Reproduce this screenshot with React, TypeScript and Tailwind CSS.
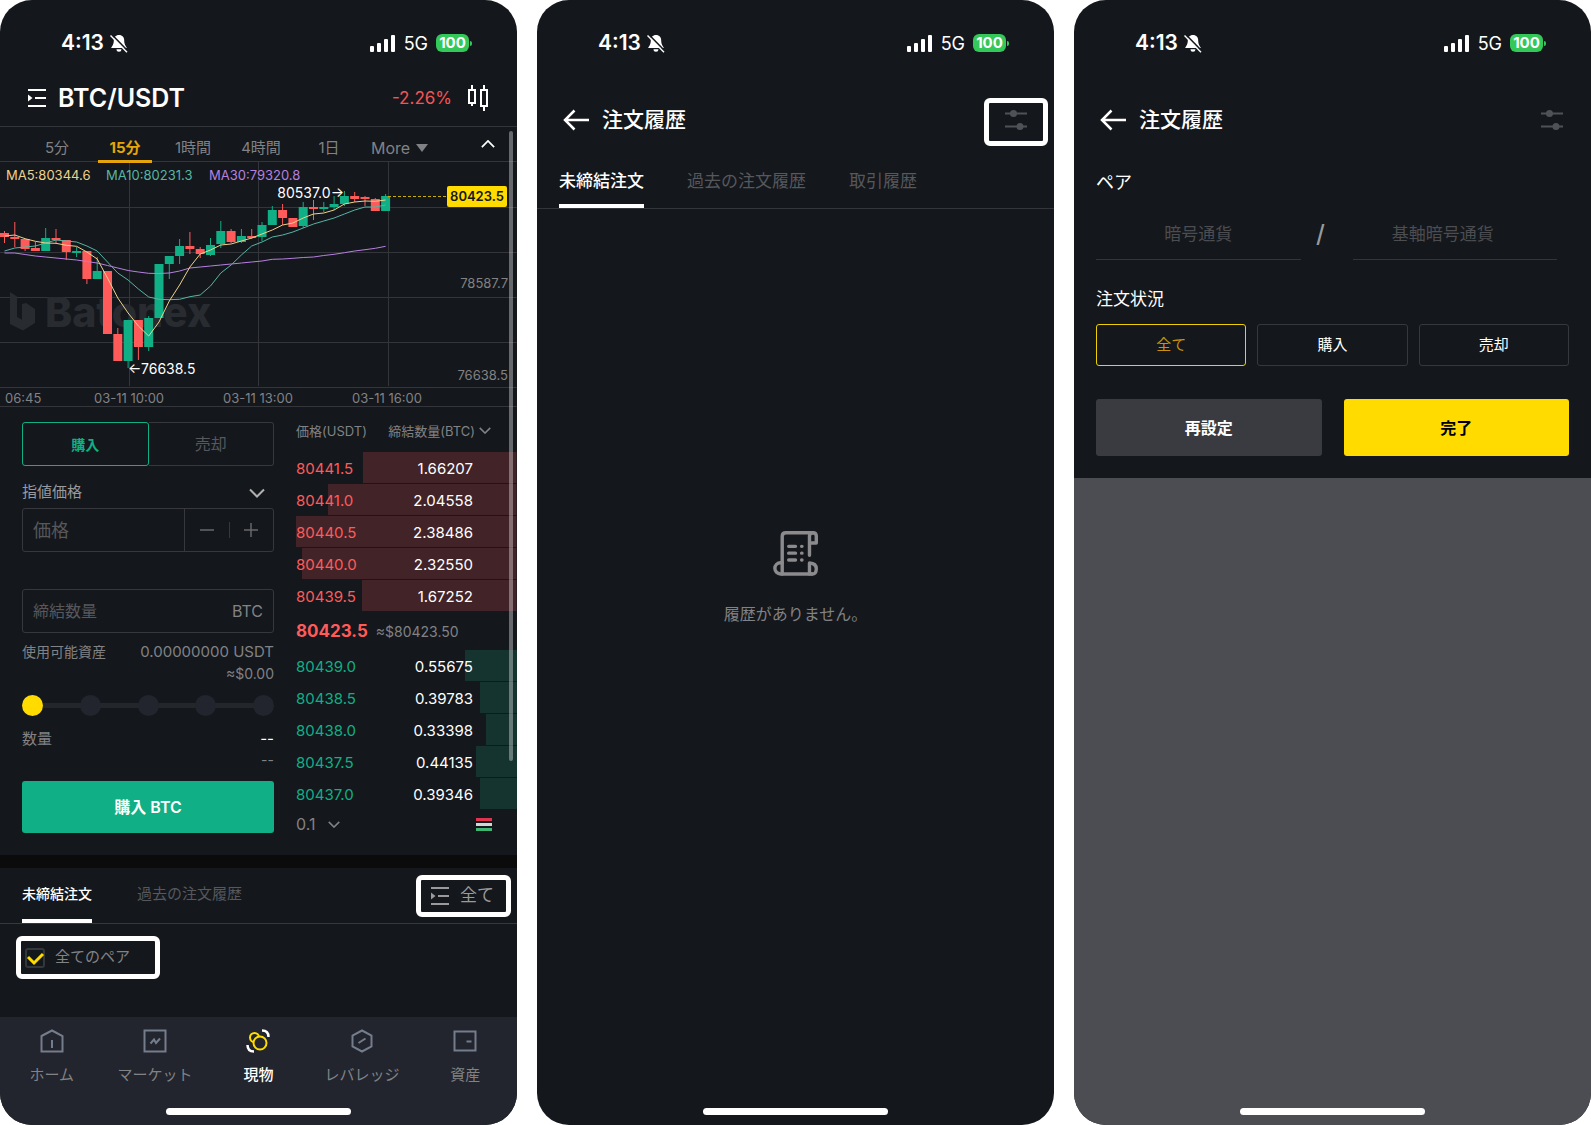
import { useState } from "react";
import type { ReactNode } from "react";

// top, bottom, high, low (chart px), up/down
const CANDLES: [number, number, number, number, boolean][] = [
  [72, 76, 70, 82, false],
  [76, 78, 61, 86, false],
  [78, 88, 78, 90, false],
  [87, 90, 81, 90, false],
  [77, 90, 67, 90, true],
  [77, 79, 68, 82, false],
  [79, 91, 79, 99, false],
  [90, 92, 86, 96, true],
  [90, 118, 90, 123, false],
  [110, 118, 96, 118, true],
  [110, 173, 110, 173, false],
  [173, 200, 167, 200, false],
  [159, 200, 159, 207, true],
  [159, 186, 159, 199, false],
  [157, 186, 155, 190, true],
  [103, 157, 103, 157, true],
  [95, 103, 95, 118, true],
  [85, 95, 78, 103, true],
  [85, 88, 71, 93, false],
  [88, 93, 86, 97, false],
  [84, 94, 77, 95, true],
  [70, 83, 60, 87, true],
  [70, 81, 68, 82, false],
  [75, 81, 68, 82, true],
  [75, 77, 68, 78, false],
  [64, 76, 61, 80, true],
  [49, 64, 45, 64, true],
  [49, 57, 43, 64, false],
  [57, 66, 57, 66, false],
  [46, 65, 41, 67, true],
  [46, 48, 39, 59, false],
  [46, 48, 41, 51, true],
  [43, 46, 35, 49, true],
  [35, 43, 30, 45, true],
  [35, 38, 31, 41, false],
  [36, 38, 35, 45, false],
  [38, 50, 37, 50, false],
  [35, 50, 33, 50, true],
];

const AVERAGES = [
  {
    color: "#b780e0",
    values: [92, 92, 93.5, 95, 96, 97, 98, 99, 100.5, 102, 104.5, 107, 109.5, 111, 112.3, 112.5, 112, 110, 107, 106, 105, 104, 103, 102, 101, 100, 98.3, 98, 97.3, 96.5, 96, 94.5, 93.3, 91.7, 90, 88.7, 87.3, 85.3],
  },
  {
    color: "#57b5a3",
    values: [90, 87, 86, 85, 82, 79, 80, 81, 85, 90, 101, 112, 119, 128, 136, 138.3, 138.7, 138.3, 135.7, 134, 125, 112, 104, 94, 85, 81, 76, 74, 71, 67, 63, 60, 57, 53, 49, 46, 46, 44],
  },
  {
    color: "#eed28b",
    values: [75, 74, 77.7, 80.3, 82, 82.3, 84.3, 85.3, 91, 98, 117, 137, 152, 165, 175, 161, 140, 124, 106, 93, 89, 84, 83, 80, 77, 73, 69, 64, 62, 57, 53, 52, 49, 43, 41, 40, 40.3, 39],
  },
];

const candleX = (i: number) => 4.5 + i * 10.3;

const ASKS = [
  { price: "80441.5", amount: "1.66207", depth: 154 },
  { price: "80441.0", amount: "2.04558", depth: 189 },
  { price: "80440.5", amount: "2.38486", depth: 221 },
  { price: "80440.0", amount: "2.32550", depth: 215 },
  { price: "80439.5", amount: "1.67252", depth: 155 },
];

const BIDS = [
  { price: "80439.0", amount: "0.55675", depth: 52 },
  { price: "80438.5", amount: "0.39783", depth: 37 },
  { price: "80438.0", amount: "0.33398", depth: 31 },
  { price: "80437.5", amount: "0.44135", depth: 41 },
  { price: "80437.0", amount: "0.39346", depth: 37 },
];

const MAX_DEPTH = 221;

function StatusBar() {
  return (
    <div className="flex h-[70px] items-center pt-4 pr-[45px] pl-[61px]">
      <span className="text-[21px] font-semibold">4:13</span>
      <svg viewBox="0 0 18 19" className="ml-[6px] h-[19px] w-[18px]" fill="none">
        <path d="M9 1c-3.300 0-5.200 2.400-5.200 5.400C3.800 11 1.800 11.800 1.200 14h15.600c-.6-2.200-2.600-3-2.600-7.600C14.200 3.400 12.300 1 9 1zM6.500 15.300a2.500 2.500 0 005 0z" fill="#fff" />
        <path d="M1.800.6L18 17.200" stroke="#14171c" strokeWidth="1.600" />
        <path d="M.5 1.400L17 18.200" stroke="#fff" strokeWidth="1.400" />
      </svg>
      <svg viewBox="0 0 26 17" className="ml-auto h-[17px] w-[26px]" fill="#fff">
        <rect x="0" y="11" width="4" height="6" rx="1" />
        <rect x="7" y="8" width="4" height="9" rx="1" />
        <rect x="14" y="4" width="4" height="13" rx="1" />
        <rect x="21" y="0" width="4" height="17" rx="1" />
      </svg>
      <span className="ml-2 text-[18px]">5G</span>
      <span className="ml-2 flex h-[18px] w-[33px] items-center justify-center rounded-md bg-[#34c759] text-[15px] font-bold">
        100
      </span>
      <span className="ml-px h-[5px] w-[2px] rounded-r bg-[#34c759]" />
    </div>
  );
}

function HomeIndicator() {
  return <div className="mx-auto mb-[10px] h-[7px] w-[185px] rounded-full bg-white" />;
}

function Phone({ children }: { children: ReactNode }) {
  return (
    <section className="relative flex flex-col overflow-hidden rounded-[32px] bg-[#14171c] text-white">
      <StatusBar />
      {children}
    </section>
  );
}

function ListIcon() {
  return (
    <svg viewBox="0 0 20 20" className="h-5 w-5" fill="none" stroke="currentColor" strokeWidth="2">
      <path d="M1 2h18M8 10h11M1 18h18" />
      <path d="M1 6.500v7l4.500-3.500z" fill="currentColor" stroke="none" />
    </svg>
  );
}

function Chevron({ className }: { className: string }) {
  return (
    <svg viewBox="0 0 16 9" className={className} fill="none" stroke="currentColor" strokeWidth="2">
      <path d="M1 1l7 7 7-7" />
    </svg>
  );
}

function FilterIcon() {
  return (
    <svg viewBox="0 0 22 20" className="h-5 w-[22px]" fill="#4f5256" stroke="#4f5256" strokeWidth="2">
      <path d="M0 3.500h22M0 16.500h22" />
      <circle cx="8.500" cy="3.500" r="2.500" />
      <circle cx="15" cy="16.500" r="2.500" />
    </svg>
  );
}

function PriceChart() {
  return (
    <svg viewBox="0 1 517 245" className="block w-full" role="img" aria-label="BTC/USDT 15分">
      <g stroke="#33353a" strokeWidth="1">
        {[46.5, 91.5, 136.5, 181.5, 226.5, 245.5].map((y) => (
          <path key={y} d={`M0 ${y}H517`} />
        ))}
        {[129.5, 258.5, 388.5].map((x) => (
          <path key={x} d={`M${x} 1V225`} />
        ))}
      </g>

      {/* watermark */}
      <g fill="#282b30">
        <path d="M10 131l7 4.500v20.500l5 2.800 0-15.800 4-1 9 6v14l-12 7.500-13-6.500z" />
        <text x="45" y="166" fontSize="41" fontWeight="800">Batonex</text>
      </g>

      {CANDLES.map(([top, bottom, high, low, up], i) => (
        <g key={i} fill={up ? "#10af85" : "#ff5b5a"}>
          <rect x={candleX(i) - 4.5} y={top} width="9" height={bottom - top} />
          <rect x={candleX(i) - 0.5} y={high} width="1" height={low - high} />
        </g>
      ))}
      {AVERAGES.map((line) => (
        <polyline
          key={line.color}
          points={line.values.map((y, i) => `${candleX(i)},${y}`).join(" ")}
          fill="none"
          stroke={line.color}
          strokeWidth="1"
        />
      ))}

      <g fontSize="13">
        <text x="6" y="19" fill="#eed28b">MA5:80344.6</text>
        <text x="106" y="19" fill="#57b5a3">MA10:80231.3</text>
        <text x="209" y="19" fill="#b780e0">MA30:79320.8</text>
      </g>
      <g fontSize="14" fill="#fff">
        <text x="344" y="37" textAnchor="end">80537.0→</text>
        <text x="128" y="213">←76638.5</text>
      </g>

      <path d="M388 35.500H447" stroke="#c9ac0c" strokeDasharray="3 2" />
      <rect x="447" y="25" width="60" height="21" rx="2" fill="#ffdb00" />
      <text x="477" y="40" textAnchor="middle" fontSize="13" fontWeight="600" fill="#14171c">80423.5</text>

      <g fontSize="13" fill="#818285">
        <text x="508" y="127" textAnchor="end">78587.7</text>
        <text x="508" y="219" textAnchor="end">76638.5</text>
        <text x="5" y="242">06:45</text>
        <text x="129" y="242" textAnchor="middle">03-11 10:00</text>
        <text x="258" y="242" textAnchor="middle">03-11 13:00</text>
        <text x="387" y="242" textAnchor="middle">03-11 16:00</text>
      </g>
    </svg>
  );
}

function BookRows({ rows, side }: { rows: typeof ASKS; side: "ask" | "bid" }) {
  const fill = side === "ask" ? "#412328" : "#15342f";
  return (
    <tbody>
      {rows.map((row) => (
        <tr
          key={row.price}
          className="h-8 bg-right-top bg-no-repeat"
          style={{
            backgroundImage: `linear-gradient(${fill}, ${fill})`,
            backgroundSize: `${(row.depth / MAX_DEPTH) * 100}% 31px`,
          }}
        >
          <td className={side === "ask" ? "pt-px text-[#ff5b5a]" : "pt-px text-[#10af85]"}>{row.price}</td>
          <td className="pt-px pr-[44px] text-right">{row.amount}</td>
        </tr>
      ))}
    </tbody>
  );
}

function OrderBook() {
  return (
    <div className="min-w-0 flex-1">
      <table className="w-full border-collapse text-[15px] leading-5">
        <thead>
          <tr className="h-[45px] text-[13px] text-[#818285]">
            <th className="pt-[2px] text-left font-normal whitespace-nowrap">価格(USDT)</th>
            <th className="pt-[2px] pr-[26px] font-normal">
              <button className="ml-auto flex items-center gap-1 whitespace-nowrap">
                締結数量(BTC)
                <Chevron className="h-[7px] w-3" />
              </button>
            </th>
          </tr>
        </thead>
        <BookRows rows={ASKS} side="ask" />
        <tbody>
          <tr className="h-[38px]">
            <td colSpan={2} className="pt-px whitespace-nowrap">
              <span className="text-[17px] font-bold text-[#ff5b5a]">80423.5</span>
              <span className="ml-2 text-[14px] text-[#818285]">≈$80423.50</span>
            </td>
          </tr>
        </tbody>
        <BookRows rows={BIDS} side="bid" />
      </table>
      <div className="flex h-[28px] items-center justify-between pr-[25px] text-[#818285]">
        <label className="relative flex items-center">
          <select aria-label="価格単位" className="w-[44px] appearance-none bg-transparent text-[16px]">
            <option>0.1</option>
          </select>
          <Chevron className="pointer-events-none absolute right-0 h-[7px] w-3" />
        </label>
        <button aria-label="板表示">
          <svg viewBox="0 0 16 13" className="h-[13px] w-4">
            <rect y="0" width="16" height="3" fill="#e0334f" />
            <rect y="5" width="16" height="3" fill="#d5d5d5" />
            <rect y="10" width="16" height="3" fill="#3fb574" />
          </svg>
        </button>
      </div>
    </div>
  );
}

function OrderForm() {
  const [percent, setPercent] = useState(0);

  return (
    <form className="flex w-[252px] shrink-0 flex-col pt-[15px] text-[#818285]" onSubmit={(e) => e.preventDefault()}>
      <div className="flex h-[44px]">
        <button type="button" className="flex-1 rounded-[3px] border border-[#10af85] text-[14px] font-bold text-[#10af85]">
          購入
        </button>
        <button type="button" className="flex-1 rounded-r-[3px] border border-l-0 border-[#36383d] text-[16px] text-[#56585c]">
          売却
        </button>
      </div>

      <label className="relative mt-[11px] flex h-[31px] items-center">
        <select aria-label="注文方法" className="w-full appearance-none bg-transparent text-[15px] text-[#9a9a9c]">
          <option>指値価格</option>
        </select>
        <Chevron className="pointer-events-none absolute right-[9px] h-[10px] w-4 text-[#b0b0b0]" />
      </label>

      <div className="flex h-[44px] items-center rounded-[3px] border border-[#36383d]">
        <input
          aria-label="価格"
          placeholder="価格"
          className="h-full min-w-0 flex-1 border-r border-[#36383d] bg-transparent pl-[10px] text-[18px] outline-none placeholder:text-[#56585c]"
        />
        <div className="flex w-[88px] items-center justify-between px-[15px] text-[#66686b]">
          <button type="button" aria-label="減らす">
            <svg viewBox="0 0 14 14" className="h-[14px] w-[14px]" stroke="currentColor" strokeWidth="1.500">
              <path d="M0 7h14" />
            </svg>
          </button>
          <span className="h-4 w-px bg-[#36383d]" />
          <button type="button" aria-label="増やす">
            <svg viewBox="0 0 14 14" className="h-[14px] w-[14px]" stroke="currentColor" strokeWidth="1.500">
              <path d="M0 7h14M7 0v14" />
            </svg>
          </button>
        </div>
      </div>

      <label className="mt-[37px] flex h-[44px] items-center rounded-[3px] border border-[#36383d] px-[10px] text-[16px]">
        <input
          aria-label="締結数量"
          placeholder="締結数量"
          className="min-w-0 flex-1 bg-transparent outline-none placeholder:text-[#56585c]"
        />
        BTC
      </label>

      <div className="mt-2 flex justify-between text-[15px] leading-[21px]">
        <span className="text-[14px]">使用可能資産</span>
        <span>0.00000000 USDT</span>
      </div>
      <div className="text-right text-[14px] leading-[23px]">≈$0.00</div>

      <div className="relative mt-[10px] flex h-[21px] items-center justify-between">
        <div className="absolute inset-x-2 top-2 h-[5px] bg-[#23262b]" />
        {[0, 25, 50, 75, 100].map((step) => (
          <span
            key={step}
            className={`relative h-[21px] w-[21px] rounded-full ${step <= percent ? "bg-[#ffdb00]" : "bg-[#22252d]"}`}
          />
        ))}
        <input
          type="range"
          aria-label="割合"
          min={0}
          max={100}
          step={25}
          value={percent}
          onChange={(e) => setPercent(Number(e.target.value))}
          className="absolute inset-0 h-full w-full cursor-pointer opacity-0"
        />
      </div>

      <div className="mt-3 flex justify-between text-[15px] leading-[22px]">
        <span>数量</span>
        <span className="text-white">--</span>
      </div>
      <div className="text-right text-[14px] leading-5">--</div>

      <button type="submit" className="mt-[11px] h-[52px] rounded-[3px] bg-[#10af85] text-[16px] font-semibold text-white">
        購入 BTC
      </button>
    </form>
  );
}

const NAV_ITEMS = [
  {
    label: "ホーム",
    icon: (
      <g stroke="#747d8c" strokeWidth="2">
        <path d="M1.500 7L12 1.500 22.500 7v15.500h-21zM12 11v8" />
      </g>
    ),
  },
  {
    label: "マーケット",
    icon: (
      <g stroke="#747d8c" strokeWidth="2">
        <path d="M1.500 1.500h21v21h-21z" />
        <path d="M7.500 14.500l3.500-4 2 3.500 4-4.500" />
      </g>
    ),
  },
  {
    label: "現物",
    active: true,
    icon: (
      <g strokeWidth="2">
        <circle cx="8.500" cy="8.500" r="4.500" stroke="#ffdb00" />
        <circle cx="14" cy="14" r="6.500" stroke="#ffdb00" fill="#22252d" />
        <path d="M16 1.500q6.500 0 6.500 6.500M1.500 16q0 6.500 6.500 6.500" stroke="#fff" strokeWidth="2.500" />
      </g>
    ),
  },
  {
    label: "レバレッジ",
    icon: (
      <g stroke="#747d8c" strokeWidth="2">
        <path d="M12 1.500l9.500 5v11l-9.500 5-9.500-5v-11z" />
        <path d="M8.500 14l7-4.500" />
      </g>
    ),
  },
  {
    label: "資産",
    icon: (
      <g stroke="#747d8c" strokeWidth="2">
        <path d="M1.500 2.500h21v19h-21z" />
        <path d="M13.500 12.500h5" />
      </g>
    ),
  },
];

function BottomNav() {
  return (
    <nav className="mt-auto bg-[#22252d] pt-3">
      <ul className="grid grid-cols-5">
        {NAV_ITEMS.map((item) => (
          <li key={item.label}>
            <a href="#" className="flex flex-col items-center gap-[10px]">
              <svg viewBox="0 0 24 24" className="h-6 w-6" fill="none">
                {item.icon}
              </svg>
              <span className={`text-[15px] leading-[24px] whitespace-nowrap ${item.active ? "font-medium text-white" : "text-[#818285]"}`}>
                {item.label}
              </span>
            </a>
          </li>
        ))}
      </ul>
      <div className="pt-[21px]">
        <HomeIndicator />
      </div>
    </nav>
  );
}

function TradeScreen() {
  const [allPairs, setAllPairs] = useState(true);

  return (
    <Phone>
      <header className="flex h-[57px] items-center border-b border-[#33353a] pr-[28px] pl-[27px]">
        <button aria-label="通貨ペア一覧">
          <ListIcon />
        </button>
        <h1 className="ml-[11px] pt-px text-[25px] font-semibold">BTC/USDT</h1>
        <span className="ml-auto pt-[2px] text-[17px] text-[#f65454]">-2.26%</span>
        <button aria-label="チャート" className="ml-[15px]">
          <svg viewBox="0 0 22 28" className="h-7 w-[22px]" fill="none" stroke="#fff" strokeWidth="2">
            <path d="M2 6h6v13H2zM14 6h6v16h-6zM5 1v5M5 19v3M17 1v5M17 22v5" />
          </svg>
        </button>
      </header>

      <div className="flex h-[35px] items-center border-b border-[#33353a] pr-[22px] pl-[23px] text-[15px] text-[#818285]">
        {["5分", "15分", "1時間", "4時間", "1日"].map((frame) => (
          <button key={frame} className="relative h-[34px] w-[68px] pt-2 whitespace-nowrap">
            {frame === "15分" ? <span className="font-bold text-[#e5a50a]">{frame}</span> : frame}
            {frame === "15分" && <span className="absolute inset-x-[7px] -bottom-[2px] h-[3px] bg-[#e5a50a]" />}
          </button>
        ))}
        <button className="flex items-center gap-[6px] pt-2 pl-2 text-[16px]">
          More
          <svg viewBox="0 0 12 8" className="h-2 w-3" fill="currentColor">
            <path d="M0 0h12L6 8z" />
          </svg>
        </button>
        <button aria-label="チャートを閉じる" className="ml-auto text-white">
          <Chevron className="h-2 w-[14px] rotate-180" />
        </button>
      </div>

      <PriceChart />

      <div className="flex gap-[22px] pb-[17px] pl-[22px]">
        <OrderForm />
        <OrderBook />
      </div>

      <div className="h-[13px] bg-[#0b0b0b]" />

      <div className="flex h-[56px] gap-[45px] border-b border-[#36383d] pr-[6px] pl-[22px] text-[15px]">
        <button className="border-b-4 border-white text-[14px] font-medium">未締結注文</button>
        <button className="pb-[2px] text-[#56585c]">過去の注文履歴</button>
        <button className="mt-[7px] ml-auto flex h-[42px] items-center gap-[10px] rounded-md border-[5px] border-white pr-[12px] pl-[9px] text-[17px] text-[#9a9a9c]">
          <ListIcon />
          全て
        </button>
      </div>

      <label className="mt-3 ml-4 flex h-[43px] w-[144px] items-center gap-[10px] rounded-md border-[5px] border-white pl-1 text-[15px] text-[#818285]">
        <span className="relative h-5 w-5">
          <input
            type="checkbox"
            checked={allPairs}
            onChange={() => setAllPairs(!allPairs)}
            className="peer block h-5 w-5 appearance-none rounded-[3px] border-2 border-[#33363b]"
          />
          <svg viewBox="0 0 20 20" className="pointer-events-none absolute inset-0 hidden peer-checked:block" fill="none" stroke="#ffdb00" strokeWidth="3">
            <path d="M3 9l6 6 9-9" />
          </svg>
        </span>
        全てのペア
      </label>

      <BottomNav />

      {/* scroll thumb */}
      <div className="absolute top-[131px] right-1 h-[630px] w-1 rounded-full bg-white/35" />
    </Phone>
  );
}

function HistoryHeader({ highlighted }: { highlighted?: boolean }) {
  return (
    <header className={`mt-3 flex h-[76px] items-center pl-[26px] ${highlighted ? "pr-[6px]" : "pr-[28px]"}`}>
      <button aria-label="戻る">
        <svg viewBox="0 0 26 22" className="h-[22px] w-[26px]" fill="none" stroke="#fff" strokeWidth="2.500">
          <path d="M26 11H2M11.500 1.500L2 11l9.500 9.500" />
        </svg>
      </button>
      <h2 className="ml-[13px] text-[21px] font-medium">注文履歴</h2>
      <button
        aria-label="絞り込み"
        className={
          highlighted
            ? "mt-1 ml-auto flex h-[48px] w-[64px] items-center justify-center rounded-md border-[5px] border-white pb-1"
            : "ml-auto"
        }
      >
        <FilterIcon />
      </button>
    </header>
  );
}

function HistoryScreen() {
  return (
    <Phone>
      <HistoryHeader highlighted />
      <div className="flex h-[51px] gap-[43px] border-b border-[#33353a] px-[22px] text-[17px]">
        <button className="border-b-4 border-white pt-[2px] font-medium">未締結注文</button>
        <button className="pb-[2px] text-[#56585c]">過去の注文履歴</button>
        <button className="pb-[2px] text-[#56585c]">取引履歴</button>
      </div>

      <div className="mt-[322px] flex flex-col items-center gap-[26px]">
        <svg viewBox="0 0 132 132" className="h-[45px] w-[45px]" fill="none" stroke="#8b8b8d" strokeWidth="10" strokeLinecap="round" strokeLinejoin="round">
          <path d="M27 126V16q0-11 11-11h79" />
          <path d="M107 71V15q0-10 10-10t10 10v20h-20" />
          <path d="M27 93H22a16 16 0 000 33h92" />
          <path d="M107 126V94q20 1 20 17t-13 15" />
          <path d="M46 45h20M84 45h1M46 65h20M84 65h1M46 85h20M84 85h1" />
        </svg>
        <p className="text-[16px] leading-6 text-[#818285]">履歴がありません。</p>
      </div>

      <div className="mt-auto">
        <HomeIndicator />
      </div>
    </Phone>
  );
}

function FilterScreen() {
  const [status, setStatus] = useState("全て");

  return (
    <Phone>
      <HistoryHeader />
      <form className="px-[22px] pb-[22px]" onSubmit={(e) => e.preventDefault()}>
        <h3 className="text-[18px] leading-[50px]">ペア</h3>
        <div className="grid grid-cols-[1fr_52px_1fr] items-center pr-3">
          <input
            aria-label="暗号通貨"
            placeholder="暗号通貨"
            className="h-[52px] w-full border-b border-[#33353a] bg-transparent text-center text-[17px] outline-none placeholder:text-[#4b4d51]"
          />
          <span className="pr-3 text-center text-[24px] font-medium text-[#9a9a9c]">/</span>
          <input
            aria-label="基軸暗号通貨"
            placeholder="基軸暗号通貨"
            className="h-[52px] w-full border-b border-[#33353a] bg-transparent pr-6 text-center text-[17px] outline-none placeholder:text-[#4b4d51]"
          />
        </div>

        <h3 className="mt-[26px] text-[17px] leading-[26px]">注文状況</h3>
        <div className="mt-3 grid grid-cols-3 gap-[11px] text-[15px]">
          {["全て", "購入", "売却"].map((option) => (
            <button
              key={option}
              type="button"
              onClick={() => setStatus(option)}
              className={`h-[42px] rounded-[3px] border ${
                status === option ? "border-[#f0d000] text-[#c8920a]" : "border-[#36383d] text-white"
              }`}
            >
              {option}
            </button>
          ))}
        </div>

        <div className="mt-[33px] grid grid-cols-2 gap-[22px] text-[16px] font-bold">
          <button type="reset" className="h-[57px] rounded-[3px] bg-[#393b40]">
            再設定
          </button>
          <button type="submit" className="h-[57px] rounded-[3px] bg-[#ffdb00] text-black">
            完了
          </button>
        </div>
      </form>

      <div className="flex flex-1 flex-col justify-end bg-[#4c4d52]">
        <HomeIndicator />
      </div>
    </Phone>
  );
}

export default function App() {
  return (
    <main
      lang="ja"
      className="grid min-h-screen grid-cols-3 gap-5 bg-white font-['Inter','Noto_Sans_CJK_JP',sans-serif]"
    >
      <TradeScreen />
      <HistoryScreen />
      <FilterScreen />
    </main>
  );
}
